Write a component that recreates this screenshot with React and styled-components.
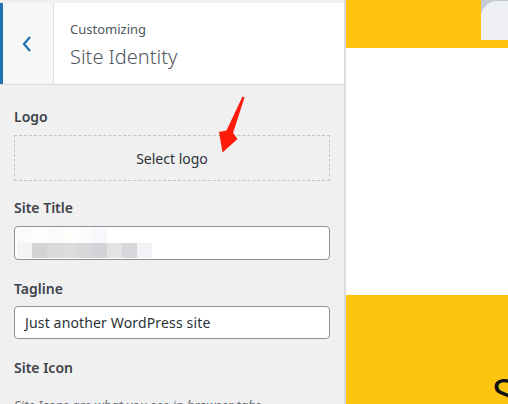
import React from "react";
import styled, { createGlobalStyle } from "styled-components";

const Global = createGlobalStyle`
  html, body { margin: 0; padding: 0; overflow: hidden; }
  body { font-family: "Noto Sans", "Segoe UI", sans-serif; background: #f0f0f1; }
  * { box-sizing: border-box; }
`;

const Page = styled.div`
  display: flex;
  width: 508px;
  height: 404px;
  overflow: hidden;
`;

const Sidebar = styled.div`
  position: relative;
  width: 346px;
  flex: none;
  background: #f0f0f1;
  border-right: 2px solid #dcdcde;
  padding-top: 3px;
`;

const Header = styled.div`
  display: flex;
  height: 82px;
  background: #fff;
  border-bottom: 1px solid #dcdcde;
`;

const BackButton = styled.div`
  width: 54px;
  flex: none;
  display: flex;
  align-items: center;
  justify-content: center;
  background: #f6f7f7;
  border-left: 3px solid #2271b1;
  border-right: 1px solid #dcdcde;
  padding-right: 2px;
  color: #2271b1;
`;

const HeaderTitles = styled.div`
  display: flex;
  flex-direction: column;
  justify-content: center;
  padding-left: 16px;
  padding-top: 4px;
  color: #50575e;
`;

const Small = styled.span`
  font-size: 13px;
  line-height: 18px;
`;

const Big = styled.span`
  font-size: 20px;
  line-height: 30px;
  font-weight: 300;
  margin-top: 4px;
`;

const Content = styled.div`
  padding: 21px 14px 0 14px;
  display: flex;
  flex-direction: column;
`;

const Label = styled.div`
  font-size: 14px;
  line-height: 21px;
  font-weight: 600;
  color: #3c434a;
  margin-top: ${(p) => p.$mt || 0}px;
  margin-bottom: ${(p) => p.$mb || 7}px;
`;

const DashedBox = styled.div`
  height: 46px;
  border: 1px dashed #c3c4c7;
  display: flex;
  align-items: center;
  justify-content: center;
  font-size: 14px;
  color: #2c3338;
`;

const Field = styled.div`
  height: ${(p) => p.$h}px;
  background: #fff;
  border: 1px solid #8c8f94;
  border-radius: 4px;
  display: flex;
  align-items: center;
  padding: 0 10px;
  font-size: 14px;
  letter-spacing: 0.15px;
  color: #2c3338;
  overflow: hidden;
`;

const Mosaic = styled.div`
  display: grid;
  grid-template-columns: repeat(9, 15px);
  grid-template-rows: 15px 15px;
  margin-left: -8px;
`;

const Cell = styled.span`
  background: ${(p) => p.$c};
`;

const Desc = styled.div`
  font-size: 13px;
  line-height: 19px;
  font-style: italic;
  color: #646970;
  margin-top: 11px;
  max-width: 300px;
`;

const Arrow = styled.svg`
  position: absolute;
  left: 0;
  top: 0;
  pointer-events: none;
`;

const Preview = styled.div`
  flex: 1;
  display: flex;
  flex-direction: column;
  background: #fff;
  overflow: hidden;
`;

const TopBand = styled.div`
  height: 48px;
  background: #fec40e;
  display: flex;
  justify-content: flex-end;
  align-items: flex-start;
`;

const AvatarBox = styled.div`
  width: 27px;
  height: 40px;
  background: #c4cbd3;
  padding-top: 1px;
`;

const AvatarInner = styled.div`
  height: 100%;
  background: #eff0f3;
  border-top-left-radius: 16px;
`;

const WhiteArea = styled.div`
  height: 247px;
  background: #fff;
`;

const YellowArea = styled.div`
  flex: 1;
  background: #fec50f;
  display: flex;
  align-items: flex-end;
  padding-left: 146px;
`;

const BigLetter = styled.span`
  font-family: "Noto Sans", sans-serif;
  font-size: 42px;
  line-height: 42px;
  color: #111;
  margin-bottom: -10px;
  white-space: nowrap;
`;

const mosaicTop = ["#fbfbfb", "#fdfdfd", "#fbfbfb", "#fffdfa", "#fcfcfc", "#f7f8fb", "#fff", "#fff", "#fff"];
const mosaicBottom = ["#f4f4f2", "#d3d3d5", "#dadadb", "#dcdcdc", "#d7d8da", "#d3d4d8", "#e3e3e3", "#d6d7db", "#f2f3f6"];

export default function App() {
  return (
    <>
      <Global />
      <Page>
        <Sidebar>
          <Header>
            <BackButton>
              <svg width="12" height="18" viewBox="0 0 12 18">
                <path d="M9 2 L3 9 L9 16" fill="none" stroke="#2271b1" strokeWidth="2.2" />
              </svg>
            </BackButton>
            <HeaderTitles>
              <Small>Customizing</Small>
              <Big>Site Identity</Big>
            </HeaderTitles>
          </Header>
          <Content>
            <Label $mb={8}>Logo</Label>
            <DashedBox>Select logo</DashedBox>
            <Label $mt={16} $mb={8}>Site Title</Label>
            <Field $h={34}>
              <Mosaic>
                {mosaicTop.map((c, i) => (
                  <Cell key={"t" + i} $c={c} />
                ))}
                {mosaicBottom.map((c, i) => (
                  <Cell key={"b" + i} $c={c} />
                ))}
              </Mosaic>
            </Field>
            <Label $mt={18}>Tagline</Label>
            <Field $h={33}>Just another WordPress site</Field>
            <Label $mt={18}>Site Icon</Label>
            <Desc>Site Icons are what you see in browser tabs, bookmark bars, and within the WordPress mobile apps.</Desc>
          </Content>
          <Arrow width="344" height="404" viewBox="0 0 344 404">
            <polygon
              points="242.5,96.5 244.5,97.5 233,133 237.5,139 222.5,152.5 219,132 226.5,130.5"
              fill="#ff1a0a"
            />
          </Arrow>
        </Sidebar>
        <Preview>
          <TopBand>
            <AvatarBox>
              <AvatarInner />
            </AvatarBox>
          </TopBand>
          <WhiteArea />
          <YellowArea>
            <BigLetter>S</BigLetter>
          </YellowArea>
        </Preview>
      </Page>
    </>
  );
}
